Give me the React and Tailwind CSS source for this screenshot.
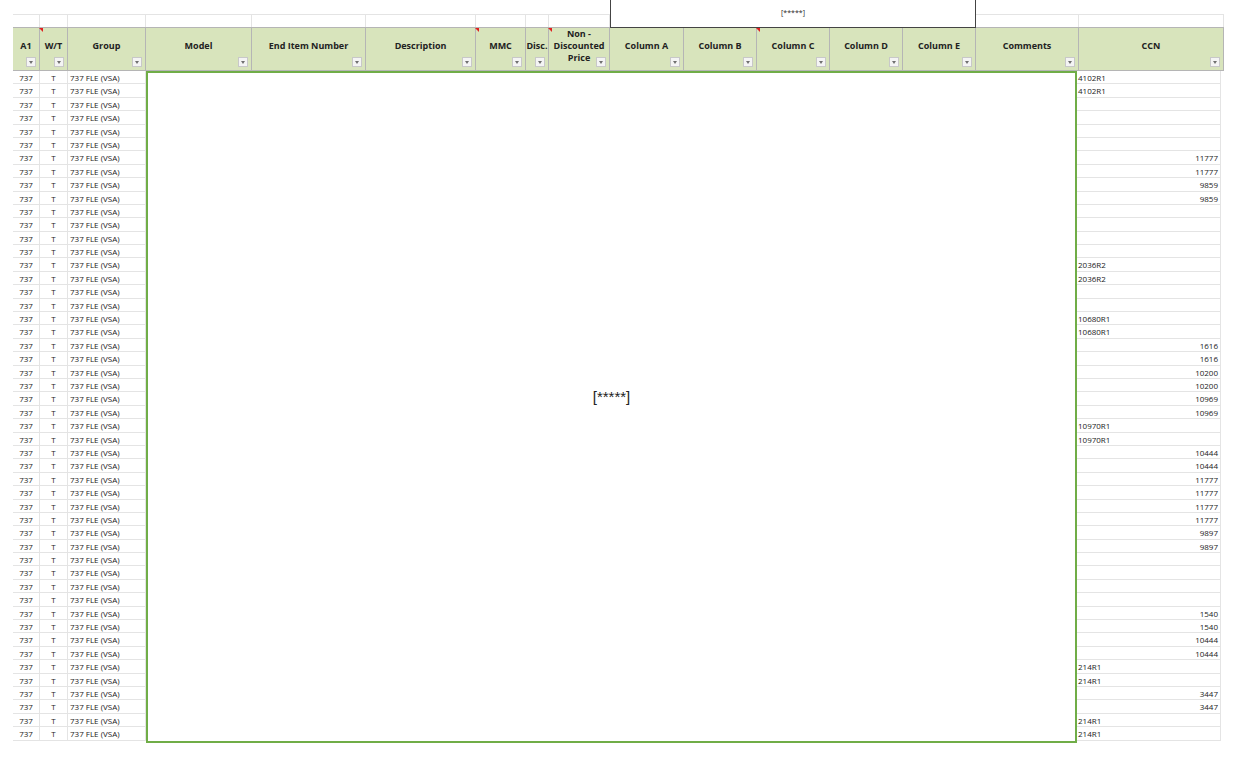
const cols = [
  { n: "A1", w: 27 }, { n: "W/T", w: 28, red: true }, { n: "Group", w: 78 }, { n: "Model", w: 106 },
  { n: "End Item Number", w: 114 }, { n: "Description", w: 110 }, { n: "MMC", w: 50, red: true },
  { n: "Disc.", w: 23 }, { n: "Non -\nDiscounted\nPrice", w: 61, red: true }, { n: "Column A", w: 74 },
  { n: "Column B", w: 73 }, { n: "Column C", w: 73, red: true }, { n: "Column D", w: 73 },
  { n: "Column E", w: 73 }, { n: "Comments", w: 103 }, { n: "CCN", w: 145 },
];
const ccn = [
  ["4102R1","l"],["4102R1","l"],null,null,null,null,["11777","r"],["11777","r"],["9859","r"],["9859","r"],
  null,null,null,null,["2036R2","l"],["2036R2","l"],null,null,["10680R1","l"],["10680R1","l"],
  ["1616","r"],["1616","r"],["10200","r"],["10200","r"],["10969","r"],["10969","r"],["10970R1","l"],["10970R1","l"],
  ["10444","r"],["10444","r"],["11777","r"],["11777","r"],["11777","r"],["11777","r"],["9897","r"],["9897","r"],
  null,null,null,null,["1540","r"],["1540","r"],["10444","r"],["10444","r"],["214R1","l"],["214R1","l"],
  ["3447","r"],["3447","r"],["214R1","l"],["214R1","l"],
];
const F = { fontFamily: '"Open Sans","Liberation Sans",sans-serif' };
function Arrow() {
  return (
    <span className="absolute right-[3px] bottom-[3px] w-[10px] h-[10px] border border-[#c8c8c8] bg-[#f4f4f4] flex items-center justify-center">
      <span className="w-0 h-0 border-l-[2.5px] border-r-[2.5px] border-t-[3px] border-l-transparent border-r-transparent border-t-[#707070]" />
    </span>
  );
}
export default function App() {
  return (
    <div className="relative w-[1246px] h-[758px] bg-white overflow-hidden text-[#222]" style={F}>
      <div className="absolute left-[610px] top-0 w-[366px] h-[28px] border border-[#444] border-t-0 bg-white z-10 flex items-center justify-center text-[7px]">[*****]</div>
      <div className="flex flex-col pl-[13px] pt-[14px]">
        <div className="flex h-[13px]">
          {cols.map((c, i) => <div key={i} style={{ width: c.w }} className="border-r border-t border-[#e4e4e4]" />)}
        </div>
        <div className="flex h-[44px]">
          {cols.map((c, i) => (
            <div key={i} style={{ width: c.w }} className="relative bg-[#d8e4bc] border-r border-t border-b border-[#b5b5b5] flex items-center justify-center text-center text-[9px] font-bold leading-[12px] whitespace-pre-line">
              {c.red && <span className="absolute left-0 top-0 w-0 h-0 border-r-[4px] border-b-[4px] border-r-transparent border-b-transparent border-l-[0px]" />}
              {c.red && <span className="absolute right-0 top-0 w-0 h-0 border-l-[5px] border-b-[5px] border-l-transparent border-b-transparent border-t-[0] bg-transparent" style={{ borderTop: "0", borderRightWidth: 0 }} />}
              {c.red && <span className="absolute left-[-1px] top-0 w-[4px] h-[4px] bg-[#e02020] [clip-path:polygon(0_0,100%_0,100%_100%)]" />}
              <span className="mb-[6px]">{c.n}</span>
              <Arrow />
            </div>
          ))}
        </div>
        {ccn.map((v, r) => (
          <div key={r} className="flex h-[13.4px] text-[8px] leading-[13px]">
            <div style={{ width: 27 }} className="border-r border-b border-[#e4e4e4] text-center">737</div>
            <div style={{ width: 28 }} className="border-r border-b border-[#e4e4e4] text-center">T</div>
            <div style={{ width: 78 }} className="border-r border-b border-[#e4e4e4] pl-[2px] whitespace-nowrap">737 FLE (VSA)</div>
            <div style={{ width: 930 }} />
            <div style={{ width: 145 }} className={"border-r border-b border-[#e4e4e4] px-[2px] " + (v && v[1] === "r" ? "text-right" : "text-left")}>{v ? v[0] : ""}</div>
          </div>
        ))}
      </div>
      <div className="absolute left-[146px] top-[71px] w-[931px] h-[672px] border-2 border-[#70ad47] bg-white flex items-center justify-center">
        <span className="text-[15px] -mt-[20px]" style={{ fontFamily: '"Liberation Sans",sans-serif' }}>[*****]</span>
      </div>
    </div>
  );
}
